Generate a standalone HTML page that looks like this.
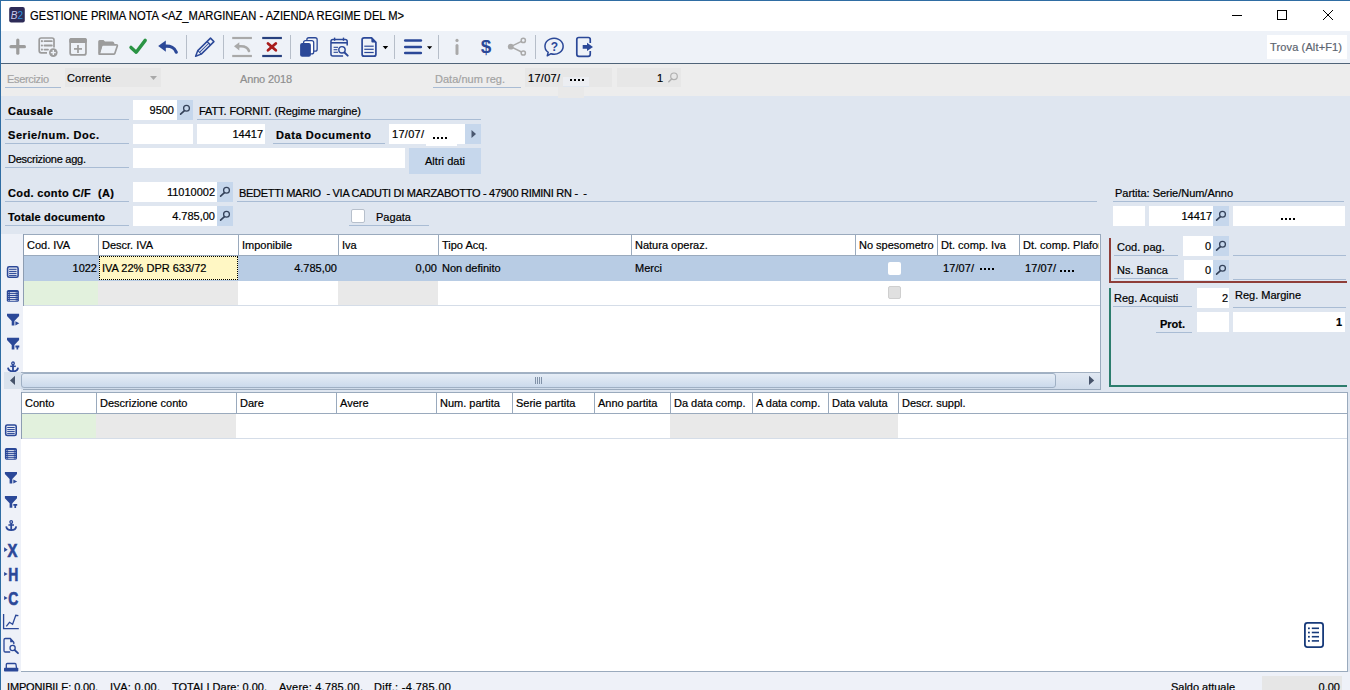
<!DOCTYPE html>
<html><head><meta charset="utf-8"><title>Gestione Prima Nota</title>
<style>
html,body{margin:0;padding:0;width:1350px;height:690px;overflow:hidden;background:#dfe6f0}
body{position:relative;font-family:"Liberation Sans",sans-serif}
#r>div{position:absolute}
.n,.b,.title{position:absolute;font-size:11px;line-height:13px;white-space:nowrap;color:#000;-webkit-text-stroke:0.2px}
.b{font-weight:bold}
.title{font-size:12px;color:#000}
svg{position:absolute;left:0;top:0}
</style></head><body>
<div id="r">
<div style="left:0px;top:0px;width:1350px;height:31px;background:#ffffff;"></div>
<div style="left:0px;top:31px;width:1350px;height:32px;background:#eef2f8;"></div>
<div style="left:0px;top:63px;width:1350px;height:1px;background:#4f6479;"></div>
<div style="left:0px;top:64px;width:1350px;height:32px;background:#ededed;"></div>
<div style="left:0px;top:96px;width:1350px;height:594px;background:#dfe6f0;"></div>
<div style="left:0px;top:0px;width:1350px;height:1px;background:#2f6da3;"></div>
<div style="left:0px;top:0px;width:1px;height:690px;background:#2f6da3;"></div>
<div style="left:1267px;top:35px;width:80px;height:24px;background:#ffffff;"></div>
<div style="left:5px;top:87px;width:56px;height:1px;background:#a9bcd4;"></div>
<div style="left:65px;top:68px;width:96px;height:19px;background:#e7e7e7;"></div>
<div style="left:433px;top:87px;width:88px;height:1px;background:#a9bcd4;"></div>
<div style="left:525px;top:68px;width:87px;height:19px;background:#e7e7e7;"></div>
<div style="left:563px;top:77px;width:26px;height:10px;background:#eceef2;"></div>
<div style="left:563px;top:86px;width:26px;height:1px;background:#dfe6ef;"></div>
<div style="left:558px;top:87px;width:26px;height:11px;background:#e9e9e9;"></div>
<div style="left:570px;top:79px;width:2px;height:2px;background:#000;"></div>
<div style="left:574px;top:79px;width:2px;height:2px;background:#000;"></div>
<div style="left:578px;top:79px;width:2px;height:2px;background:#000;"></div>
<div style="left:582px;top:79px;width:2px;height:2px;background:#000;"></div>
<div style="left:617px;top:68px;width:64px;height:19px;background:#e7e7e7;"></div>
<div style="left:5px;top:119px;width:124px;height:1px;background:#a9bcd4;"></div>
<div style="left:133px;top:100px;width:44px;height:20px;background:#fff;"></div>
<div style="left:177px;top:100px;width:16px;height:20px;background:#c6d7ec;"></div>
<div style="left:197px;top:119px;width:284px;height:1px;background:#a9bcd4;"></div>
<div style="left:5px;top:143px;width:124px;height:1px;background:#a9bcd4;"></div>
<div style="left:133px;top:124px;width:60px;height:20px;background:#fff;"></div>
<div style="left:197px;top:124px;width:68px;height:20px;background:#fff;"></div>
<div style="left:273px;top:143px;width:112px;height:1px;background:#a9bcd4;"></div>
<div style="left:389px;top:124px;width:76px;height:20px;background:#fff;"></div>
<div style="left:433px;top:137px;width:2px;height:2px;background:#000;"></div>
<div style="left:437px;top:137px;width:2px;height:2px;background:#000;"></div>
<div style="left:441px;top:137px;width:2px;height:2px;background:#000;"></div>
<div style="left:445px;top:137px;width:2px;height:2px;background:#000;"></div>
<div style="left:426px;top:144px;width:31px;height:2px;background:#ffffff;"></div>
<div style="left:465px;top:124px;width:16px;height:20px;background:#c6d7ec;"></div>
<div style="left:5px;top:167px;width:124px;height:1px;background:#a9bcd4;"></div>
<div style="left:133px;top:148px;width:272px;height:20px;background:#fff;"></div>
<div style="left:409px;top:148px;width:72px;height:26px;background:#c6d7ec;"></div>
<div style="left:5px;top:201px;width:124px;height:1px;background:#a9bcd4;"></div>
<div style="left:133px;top:182px;width:84px;height:20px;background:#fff;"></div>
<div style="left:217px;top:182px;width:16px;height:20px;background:#c6d7ec;"></div>
<div style="left:237px;top:201px;width:860px;height:1px;background:#a9bcd4;"></div>
<div style="left:5px;top:225px;width:124px;height:1px;background:#a9bcd4;"></div>
<div style="left:133px;top:206px;width:84px;height:20px;background:#fff;"></div>
<div style="left:217px;top:206px;width:16px;height:20px;background:#c6d7ec;"></div>
<div style="left:351px;top:209px;width:14px;height:14px;background:#fff;box-sizing:border-box;border:1px solid #b7c0cc;border-radius:2px"></div>
<div style="left:349px;top:225px;width:80px;height:1px;background:#a9bcd4;"></div>
<div style="left:1113px;top:201px;width:231px;height:1px;background:#a9bcd4;"></div>
<div style="left:1113px;top:206px;width:32px;height:20px;background:#fff;"></div>
<div style="left:1149px;top:206px;width:64px;height:20px;background:#fff;"></div>
<div style="left:1213px;top:206px;width:16px;height:20px;background:#c6d7ec;"></div>
<div style="left:1233px;top:206px;width:112px;height:20px;background:#fff;"></div>
<div style="left:1281px;top:218px;width:2px;height:2px;background:#000;"></div>
<div style="left:1285px;top:218px;width:2px;height:2px;background:#000;"></div>
<div style="left:1289px;top:218px;width:2px;height:2px;background:#000;"></div>
<div style="left:1293px;top:218px;width:2px;height:2px;background:#000;"></div>
<div style="left:1px;top:234px;width:22px;height:155px;background:#eef1f8;"></div>
<div style="left:23px;top:234px;width:1078px;height:156px;background:#ffffff;box-sizing:border-box;border:1px solid #9aaabd;border-left:0"></div>
<div style="left:23px;top:234px;width:1px;height:72px;background:#8d9db2;"></div>
<div style="left:24px;top:255px;width:1076px;height:1px;background:#9aaabd;"></div>
<div style="left:24px;top:256px;width:1076px;height:25px;background:#b8cce4;"></div>
<div style="left:99px;top:256px;width:139px;height:24px;background:#fff7c4;box-sizing:border-box;border:1px dotted #000"></div>
<div style="left:24px;top:281px;width:74px;height:24px;background:#e2f1dd;"></div>
<div style="left:98px;top:281px;width:140px;height:24px;background:#e9e9e9;"></div>
<div style="left:338px;top:281px;width:100px;height:24px;background:#e9e9e9;"></div>
<div style="left:24px;top:305px;width:1076px;height:1px;background:#d5dde8;"></div>
<div style="left:98px;top:235px;width:1px;height:20px;background:#9aaabd;"></div>
<div style="left:238px;top:235px;width:1px;height:20px;background:#9aaabd;"></div>
<div style="left:338px;top:235px;width:1px;height:20px;background:#9aaabd;"></div>
<div style="left:438px;top:235px;width:1px;height:20px;background:#9aaabd;"></div>
<div style="left:631px;top:235px;width:1px;height:20px;background:#9aaabd;"></div>
<div style="left:855px;top:235px;width:1px;height:20px;background:#9aaabd;"></div>
<div style="left:937px;top:235px;width:1px;height:20px;background:#9aaabd;"></div>
<div style="left:1019px;top:235px;width:1px;height:20px;background:#9aaabd;"></div>
<div style="left:888px;top:262px;width:13px;height:13px;background:#fff;border-radius:2px"></div>
<div style="left:888px;top:286px;width:13px;height:13px;background:#e0e0e0;box-sizing:border-box;border:1px solid #cfcfcf;border-radius:2px"></div>
<div style="left:980px;top:268px;width:2px;height:2px;background:#000;"></div>
<div style="left:984px;top:268px;width:2px;height:2px;background:#000;"></div>
<div style="left:988px;top:268px;width:2px;height:2px;background:#000;"></div>
<div style="left:992px;top:268px;width:2px;height:2px;background:#000;"></div>
<div style="left:1060px;top:270px;width:2px;height:2px;background:#000;"></div>
<div style="left:1064px;top:270px;width:2px;height:2px;background:#000;"></div>
<div style="left:1068px;top:270px;width:2px;height:2px;background:#000;"></div>
<div style="left:1072px;top:270px;width:2px;height:2px;background:#000;"></div>
<div style="left:21px;top:372px;width:1079px;height:17px;background:linear-gradient(#e2e9f3,#cfdbea);"></div>
<div style="left:21px;top:372px;width:1079px;height:1px;background:#a3b1c2;"></div>
<div style="left:21px;top:373px;width:1035px;height:15px;background:linear-gradient(#e6edf6,#cbdaec);box-sizing:border-box;border:1px solid #9fb0c4;border-radius:3px"></div>
<div style="left:4px;top:372px;width:17px;height:17px;background:#d9e2ed;"></div>
<div style="left:12px;top:389px;width:6px;height:1px;background:#2b4898;"></div>
<div style="left:1109px;top:238px;width:2px;height:45px;background:#8f3e39;"></div>
<div style="left:1109px;top:281px;width:238px;height:2px;background:#8f3e39;"></div>
<div style="left:1114px;top:255px;width:64px;height:1px;background:#a9bcd4;"></div>
<div style="left:1183px;top:236px;width:30px;height:20px;background:#fff;"></div>
<div style="left:1213px;top:236px;width:16px;height:20px;background:#c6d7ec;"></div>
<div style="left:1233px;top:255px;width:113px;height:1px;background:#a9bcd4;"></div>
<div style="left:1114px;top:278px;width:64px;height:1px;background:#a9bcd4;"></div>
<div style="left:1184px;top:260px;width:29px;height:20px;background:#fff;"></div>
<div style="left:1213px;top:260px;width:16px;height:20px;background:#c6d7ec;"></div>
<div style="left:1233px;top:279px;width:113px;height:1px;background:#a9bcd4;"></div>
<div style="left:1109px;top:288px;width:2px;height:99px;background:#2c7d6d;"></div>
<div style="left:1109px;top:385px;width:238px;height:2px;background:#2c7d6d;"></div>
<div style="left:1113px;top:306px;width:79px;height:1px;background:#a9bcd4;"></div>
<div style="left:1197px;top:288px;width:32px;height:20px;background:#fff;"></div>
<div style="left:1233px;top:307px;width:113px;height:1px;background:#a9bcd4;"></div>
<div style="left:1156px;top:332px;width:36px;height:1px;background:#a9bcd4;"></div>
<div style="left:1197px;top:312px;width:32px;height:20px;background:#fff;"></div>
<div style="left:1233px;top:312px;width:112px;height:20px;background:#fff;"></div>
<div style="left:1px;top:389px;width:20px;height:283px;background:#eef1f8;"></div>
<div style="left:21px;top:392px;width:1327px;height:280px;background:#ffffff;box-sizing:border-box;border:1px solid #9aaabd;border-left:0"></div>
<div style="left:21px;top:392px;width:1px;height:47px;background:#8d9db2;"></div>
<div style="left:22px;top:413px;width:1325px;height:1px;background:#9aaabd;"></div>
<div style="left:22px;top:414px;width:74px;height:24px;background:#e2f1dd;"></div>
<div style="left:96px;top:414px;width:140px;height:24px;background:#e9e9e9;"></div>
<div style="left:670px;top:414px;width:228px;height:24px;background:#e9e9e9;"></div>
<div style="left:22px;top:438px;width:1325px;height:1px;background:#d5dde8;"></div>
<div style="left:96px;top:393px;width:1px;height:20px;background:#9aaabd;"></div>
<div style="left:236px;top:393px;width:1px;height:20px;background:#9aaabd;"></div>
<div style="left:336px;top:393px;width:1px;height:20px;background:#9aaabd;"></div>
<div style="left:436px;top:393px;width:1px;height:20px;background:#9aaabd;"></div>
<div style="left:512px;top:393px;width:1px;height:20px;background:#9aaabd;"></div>
<div style="left:594px;top:393px;width:1px;height:20px;background:#9aaabd;"></div>
<div style="left:670px;top:393px;width:1px;height:20px;background:#9aaabd;"></div>
<div style="left:752px;top:393px;width:1px;height:20px;background:#9aaabd;"></div>
<div style="left:828px;top:393px;width:1px;height:20px;background:#9aaabd;"></div>
<div style="left:898px;top:393px;width:1px;height:20px;background:#9aaabd;"></div>
<div style="left:1px;top:672px;width:1349px;height:18px;background:#eef1f8;"></div>
<div style="left:1262px;top:676px;width:80px;height:14px;background:#e6e6e6;"></div>
</div>
<div id="t0" class="title" style="top:10px;left:30px;transform:scaleX(0.932);transform-origin:0 0">GESTIONE PRIMA NOTA &lt;AZ_MARGINEAN - AZIENDA REGIME DEL M&gt;</div>
<div id="t1" class="n" style="top:41px;left:1270px;letter-spacing:0.138px;color:#5c6470">Trova (Alt+F1)</div>
<div id="t2" class="n" style="top:73px;left:7px;letter-spacing:-0.328px;color:#a3a3a3">Esercizio</div>
<div id="t3" class="n" style="top:72px;left:67px;letter-spacing:0.172px;">Corrente</div>
<div id="t4" class="n" style="top:73px;left:240px;letter-spacing:-0.152px;color:#8f8f8f">Anno 2018</div>
<div id="t5" class="n" style="top:73px;left:435px;letter-spacing:0.025px;color:#a3a3a3">Data/num reg.</div>
<div id="t6" class="n" style="top:72px;left:528px;letter-spacing:0.281px;">17/07/</div>
<div id="t7" class="n" style="top:72px;right:687px;">1</div>
<div id="t8" class="b" style="top:105px;left:8px;letter-spacing:0.466px;">Causale</div>
<div id="t9" class="n" style="top:104px;right:1176px;">9500</div>
<div id="t10" class="n" style="top:105px;left:199px;letter-spacing:-0.098px;">FATT. FORNIT. (Regime margine)</div>
<div id="t11" class="b" style="top:129px;left:8px;letter-spacing:0.561px;">Serie/num. Doc.</div>
<div id="t12" class="n" style="top:128px;right:1087px;">14417</div>
<div id="t13" class="b" style="top:129px;left:276px;letter-spacing:0.584px;">Data Documento</div>
<div id="t14" class="n" style="top:128px;left:392px;letter-spacing:0.281px;">17/07/</div>
<div id="t15" class="n" style="top:153px;left:8px;letter-spacing:-0.263px;">Descrizione agg.</div>
<div id="t16" class="n" style="top:155px;left:425px;letter-spacing:0.028px;">Altri dati</div>
<div id="t17" class="b" style="top:187px;left:8px;letter-spacing:0.356px;white-space:pre">Cod. conto C/F  (A)</div>
<div id="t18" class="n" style="top:186px;right:1135px;">11010002</div>
<div id="t19" class="n" style="top:187px;left:239px;letter-spacing:-0.284px;white-space:pre">BEDETTI MARIO  - VIA CADUTI DI MARZABOTTO - 47900 RIMINI RN -  -</div>
<div id="t20" class="b" style="top:211px;left:8px;letter-spacing:0.205px;">Totale documento</div>
<div id="t21" class="n" style="top:210px;right:1135px;">4.785,00</div>
<div id="t22" class="n" style="top:211px;left:376px;letter-spacing:0.025px;">Pagata</div>
<div id="t23" class="n" style="top:187px;left:1115px;letter-spacing:-0.028px;">Partita: Serie/Num/Anno</div>
<div id="t24" class="n" style="top:210px;right:138px;">14417</div>
<div id="t25" class="n" style="top:239px;left:27px;">Cod. IVA</div>
<div id="t26" class="n" style="top:239px;left:102px;">Descr. IVA</div>
<div id="t27" class="n" style="top:239px;left:242px;">Imponibile</div>
<div id="t28" class="n" style="top:239px;left:342px;">Iva</div>
<div id="t29" class="n" style="top:239px;left:442px;">Tipo Acq.</div>
<div id="t30" class="n" style="top:239px;left:635px;">Natura operaz.</div>
<div id="t31" class="n" style="top:239px;left:859px;">No spesometro</div>
<div id="t32" class="n" style="top:239px;left:941px;">Dt. comp. Iva</div>
<div id="t33" class="n" style="top:239px;left:1023px;overflow:hidden;width:76px">Dt. comp. Plafond</div>
<div id="t34" class="n" style="top:262px;right:1253px;">1022</div>
<div id="t35" class="n" style="top:262px;left:102px;">IVA 22% DPR 633/72</div>
<div id="t36" class="n" style="top:262px;right:1013px;">4.785,00</div>
<div id="t37" class="n" style="top:262px;right:913px;">0,00</div>
<div id="t38" class="n" style="top:262px;left:442px;">Non definito</div>
<div id="t39" class="n" style="top:262px;left:635px;">Merci</div>
<div id="t40" class="n" style="top:262px;left:943px;letter-spacing:0.081px;">17/07/</div>
<div id="t41" class="n" style="top:262px;left:1025px;letter-spacing:0.081px;">17/07/</div>
<div id="t42" class="n" style="top:241px;left:1117px;">Cod. pag.</div>
<div id="t43" class="n" style="top:240px;right:139px;">0</div>
<div id="t44" class="n" style="top:264px;left:1117px;">Ns. Banca</div>
<div id="t45" class="n" style="top:264px;right:139px;">0</div>
<div id="t46" class="n" style="top:292px;left:1114px;">Reg. Acquisti</div>
<div id="t47" class="n" style="top:292px;right:122px;">2</div>
<div id="t48" class="n" style="top:289px;left:1235px;">Reg. Margine</div>
<div id="t49" class="b" style="top:318px;left:1160px;">Prot.</div>
<div id="t50" class="b" style="top:316px;right:8px;">1</div>
<div id="t51" class="n" style="top:397px;left:25px;">Conto</div>
<div id="t52" class="n" style="top:397px;left:100px;">Descrizione conto</div>
<div id="t53" class="n" style="top:397px;left:240px;">Dare</div>
<div id="t54" class="n" style="top:397px;left:340px;">Avere</div>
<div id="t55" class="n" style="top:397px;left:440px;">Num. partita</div>
<div id="t56" class="n" style="top:397px;left:516px;">Serie partita</div>
<div id="t57" class="n" style="top:397px;left:598px;">Anno partita</div>
<div id="t58" class="n" style="top:397px;left:674px;">Da data comp.</div>
<div id="t59" class="n" style="top:397px;left:756px;">A data comp.</div>
<div id="t60" class="n" style="top:397px;left:832px;">Data valuta</div>
<div id="t61" class="n" style="top:397px;left:902px;">Descr. suppl.</div>
<div id="t62" class="n" style="top:681px;left:7px;letter-spacing:-0.159px;">IMPONIBILE: 0,00,</div>
<div id="t63" class="n" style="top:681px;left:110px;letter-spacing:0.278px;">IVA: 0,00,</div>
<div id="t64" class="n" style="top:681px;left:172px;letter-spacing:0.002px;">TOTALI Dare: 0,00,</div>
<div id="t65" class="n" style="top:681px;left:279px;letter-spacing:0.231px;">Avere: 4.785,00,</div>
<div id="t66" class="n" style="top:681px;left:374px;letter-spacing:0.336px;">Diff.: -4.785,00</div>
<div id="t67" class="n" style="top:681px;left:1171px;letter-spacing:-0.018px;">Saldo attuale</div>
<div id="t68" class="n" style="top:681px;right:10px;">0,00</div>
<svg width="1350" height="690" viewBox="0 0 1350 690" style="position:absolute;left:0;top:0;pointer-events:none">
<!-- app icon -->
<rect x="9.2" y="7" width="15.6" height="15.5" rx="2" fill="#2d2b57"/>
<text x="10.8" y="18.6" font-family="Liberation Sans" font-style="italic" font-size="10" fill="#c9c9ec">B</text>
<text x="17.6" y="18.6" font-family="Liberation Sans" font-size="10" fill="#2f93dc">2</text>
<!-- window controls -->
<g stroke="#000" stroke-width="1" fill="none">
<line x1="1232" y1="15.5" x2="1242" y2="15.5"/>
<rect x="1277.5" y="10.5" width="9" height="9"/>
<line x1="1323" y1="10" x2="1333" y2="20"/><line x1="1333" y1="10" x2="1323" y2="20"/>
</g>
<!-- toolbar separators -->
<g fill="#b6bec9">
<rect x="186" y="35" width="1" height="24"/><rect x="223" y="35" width="1" height="24"/>
<rect x="290" y="35" width="1" height="24"/><rect x="394" y="35" width="1" height="24"/>
<rect x="438" y="35" width="1" height="24"/><rect x="535" y="35" width="1" height="24"/>
</g>
<!-- plus -->
<g stroke="#9c9c9c" stroke-width="3.2" stroke-linecap="round">
<line x1="11" y1="46.7" x2="24.4" y2="46.7"/><line x1="17.8" y1="40" x2="17.8" y2="53.2"/>
</g>
<!-- list plus -->
<g stroke="#9c9c9c" fill="none">
<path d="M47,52.85 H41.2 A2,2 0 0 1 39.2,50.85 V40 A2,2 0 0 1 41.2,38 H52 A2,2 0 0 1 54,40 V47.5" stroke-width="1.7"/>
<line x1="44.5" y1="41.2" x2="51.8" y2="41.2" stroke-width="1.8" stroke-linecap="round"/>
<line x1="44.5" y1="45.5" x2="51.8" y2="45.5" stroke-width="1.8" stroke-linecap="round"/>
<line x1="44.5" y1="49.6" x2="48" y2="49.6" stroke-width="1.8" stroke-linecap="round"/>
</g>
<g fill="#9c9c9c"><circle cx="41.9" cy="41.2" r="1.1"/><circle cx="41.9" cy="45.5" r="1.1"/><circle cx="41.9" cy="49.6" r="1.1"/></g>
<circle cx="53.3" cy="52.6" r="4.3" fill="#9c9c9c"/>
<g stroke="#eef2f8" stroke-width="1.4"><line x1="50.8" y1="52.6" x2="55.8" y2="52.6"/><line x1="53.3" y1="50.1" x2="53.3" y2="55.1"/></g>
<!-- calendar plus -->
<rect x="70.15" y="38.95" width="15.8" height="16" rx="2" fill="none" stroke="#9c9c9c" stroke-width="1.7"/>
<rect x="69.3" y="38.1" width="17.5" height="4.9" rx="1.5" fill="#9c9c9c"/>
<g stroke="#9c9c9c" stroke-width="1.7"><line x1="74" y1="48.9" x2="82" y2="48.9"/><line x1="78" y1="45" x2="78" y2="53"/></g>
<!-- folder -->
<path d="M98.2,53 V41.5 Q98.2,40 99.7,40 H103.5 L105,41.5 H112.5 Q114,41.5 114.3,43 L114.5,44 H105 Q103,44 102.3,46 L99.5,54 Q98.2,54.2 98.2,53 Z" fill="#9c9c9c"/>
<path d="M101.8,44.8 H116.3 Q117.6,44.8 117.3,46 L114.8,53.4 Q114.5,54.2 113.6,54.2 H99.2 Z" fill="none" stroke="#9c9c9c" stroke-width="1.7" stroke-linejoin="round"/>
<!-- check -->
<polyline points="131,47.4 136.2,52.2 145.2,40.4" fill="none" stroke="#2a9444" stroke-width="3.4" stroke-linecap="round" stroke-linejoin="round"/>
<!-- undo -->
<path d="M158.2,46.1 L165.8,40.6 V51.8 Z" fill="#2b4898"/>
<path d="M164.5,46.3 C170.5,45.6 175,48.2 176.3,52.2" fill="none" stroke="#2b4898" stroke-width="3.2" stroke-linecap="round"/>
<!-- pencil -->
<g transform="translate(195.6,56.2) rotate(-44.5)" fill="none" stroke="#2b4898" stroke-width="1.5" stroke-linejoin="round">
<path d="M0,0 L5.5,-2.45 H23.3 V2.45 H5.5 Z"/>
<line x1="18.5" y1="-2.45" x2="18.5" y2="2.45"/>
<line x1="5.5" y1="0" x2="18.5" y2="0" stroke-width="1"/>
<line x1="5.5" y1="-2.45" x2="5.5" y2="2.45" stroke-width="1"/>
</g>
<!-- gray undo with lines -->
<g stroke="#a9a9a9" stroke-width="2.2"><line x1="232.2" y1="38" x2="251.9" y2="38"/><line x1="232.2" y1="56" x2="251.9" y2="56"/></g>
<path d="M234,46.3 L239.3,42.3 V50.4 Z" fill="#a9a9a9"/>
<path d="M238.5,46.4 C244,45.8 248,47.8 249,51" fill="none" stroke="#a9a9a9" stroke-width="2.6" stroke-linecap="round"/>
<!-- X with lines -->
<g stroke="#27407e" stroke-width="2.2"><line x1="262.2" y1="38" x2="281.9" y2="38"/><line x1="262.2" y1="56" x2="281.9" y2="56"/></g>
<g stroke="#a81d1d" stroke-width="2.8" stroke-linecap="round"><line x1="268" y1="43.5" x2="275.8" y2="50.3"/><line x1="275.8" y1="43.5" x2="268" y2="50.3"/></g>
<!-- copy -->
<g fill="none" stroke="#2b4898" stroke-width="1.3">
<rect x="306.85" y="37.75" width="10.3" height="13.4" rx="2"/>
</g>
<rect x="303.6" y="40.6" width="10.1" height="13.3" rx="2" fill="#fff" stroke="#2b4898" stroke-width="1.3"/>
<rect x="300.1" y="42.9" width="10.8" height="13.9" rx="2" fill="#2b4898"/>
<!-- calendar search -->
<g fill="none" stroke="#2b4898" stroke-width="1.5">
<path d="M343.1,56.05 H332.9 A2,2 0 0 1 330.95,54.05 V41.4 A2,2 0 0 1 332.95,39.4 H345.2 A2,2 0 0 1 347.2,41.4 V45.6"/>
<line x1="331" y1="42.8" x2="347.2" y2="42.8" stroke-width="1.6"/>
<line x1="334.6" y1="37.6" x2="334.6" y2="40.8" stroke-width="1.4"/>
<line x1="343.5" y1="37.6" x2="343.5" y2="40.8" stroke-width="1.4"/>
<line x1="333.6" y1="47.3" x2="338" y2="47.3" stroke-width="1.1"/>
<line x1="333.6" y1="49.7" x2="337.4" y2="49.7" stroke-width="1.1"/>
<line x1="333.6" y1="52.3" x2="338" y2="52.3" stroke-width="1.1"/>
<circle cx="342" cy="49.8" r="3.2" stroke-width="1.4"/>
<line x1="344.5" y1="52.5" x2="347.7" y2="55.6" stroke-width="2" stroke-linecap="round"/>
</g>
<!-- doc -->
<path d="M371.6,37.85 H364.1 A2,2 0 0 0 362.1,39.85 V54.15 A2,2 0 0 0 364.1,56.15 H373.9 A2,2 0 0 0 375.9,54.15 V42.3 Z" fill="none" stroke="#2b4898" stroke-width="1.7" stroke-linejoin="round"/>
<path d="M371.4,37.6 L376.4,42.6 H372.4 Q371.4,42.6 371.4,41.6 Z" fill="#2b4898"/>
<g stroke="#2b4898" stroke-width="1.2"><line x1="364.3" y1="46.2" x2="373.7" y2="46.2"/><line x1="364.3" y1="49.3" x2="373.7" y2="49.3"/><line x1="364.3" y1="52.5" x2="373.7" y2="52.5"/></g>
<path d="M382.7,46 H388.2 L385.45,49.2 Z" fill="#000"/>
<!-- menu -->
<g stroke="#2b4898" stroke-width="2.5" stroke-linecap="round"><line x1="405.2" y1="40.6" x2="420.9" y2="40.6"/><line x1="405.2" y1="46.9" x2="420.9" y2="46.9"/><line x1="405.2" y1="53" x2="420.9" y2="53"/></g>
<path d="M427,46.2 H432.2 L429.6,49.2 Z" fill="#000"/>
<!-- i -->
<circle cx="457" cy="40.4" r="1.6" fill="#a9a9a9"/>
<line x1="457" y1="45.4" x2="457" y2="53.4" stroke="#a9a9a9" stroke-width="3" stroke-linecap="round"/>
<!-- $ -->
<text x="480.8" y="53.4" font-family="Liberation Sans" font-weight="bold" font-size="19" fill="#2b4898">$</text>
<!-- share -->
<g stroke="#a9a9a9" stroke-width="1.5" fill="none">
<line x1="510.7" y1="46.7" x2="521.5" y2="41.4"/><line x1="510.7" y1="46.7" x2="521.5" y2="52"/>
<circle cx="523.3" cy="40.4" r="2.1"/><circle cx="523.3" cy="53" r="2.1"/>
</g>
<circle cx="510.7" cy="46.7" r="2.9" fill="#a9a9a9"/>
<!-- help -->
<path d="M548.2,52.3 A9.1,7.95 0 1 1 551,53.7 L547.3,55.8 Z" fill="none" stroke="#2b4898" stroke-width="1.5" stroke-linejoin="round"/>
<text x="550.7" y="50.8" font-family="Liberation Sans" font-weight="bold" font-size="12" fill="#2b4898">?</text>
<!-- exit -->
<path d="M590.25,43 V39.5 A2,2 0 0 0 588.25,37.5 H578.8 A2,2 0 0 0 576.8,39.5 V54.3 A2,2 0 0 0 578.8,56.3 H588.25 A2,2 0 0 0 590.25,54.3 V51" fill="none" stroke="#2b4898" stroke-width="1.7"/>
<path d="M582.7,45 H587 V42.7 L593,46.9 L587,50.9 V48.8 H582.7 Z" fill="#2b4898"/>

<!-- field magnifiers -->
<g id="mag" fill="none" stroke="#34425a" stroke-width="1.3">
<circle cx="186.5" cy="108.3" r="2.9"/><line x1="184.2" y1="110.8" x2="180.6" y2="114.2" stroke-width="1.6" stroke-linecap="round"/>
</g>
<use href="#mag" x="40" y="82"/>
<use href="#mag" x="40" y="106"/>
<use href="#mag" x="1036" y="106"/>
<use href="#mag" x="1036" y="136"/>
<use href="#mag" x="1036" y="160"/>
<g fill="none" stroke="#b0b0b0" stroke-width="1.2">
<circle cx="674" cy="76.3" r="3.3"/><line x1="671.6" y1="78.9" x2="668.8" y2="81.8" stroke-width="1.5" stroke-linecap="round"/>
</g>
<!-- combo triangle -->
<path d="M150,76 H157 L153.5,80 Z" fill="#a9a9a9"/>
<!-- date arrow -->
<path d="M471.5,130 L476,134 L471.5,138 Z" fill="#4a5870"/>
<!-- scrollbar arrows & grip -->
<path d="M15,375.8 V385 L10,380.4 Z" fill="#46536a"/>
<path d="M1089,375.8 V385 L1094.2,380.4 Z" fill="#46536a"/>
<g fill="#8192a8"><rect x="535" y="377" width="1" height="7"/><rect x="537" y="377" width="1" height="7"/><rect x="539" y="377" width="1" height="7"/><rect x="541" y="377" width="1" height="7"/></g>

<!-- side icons: define -->
<defs>
<g id="iA"><rect x="0.8" y="0.8" width="10.5" height="10.5" rx="1.6" fill="none" stroke="#2b4898" stroke-width="1.6"/>
<g stroke="#2b4898" stroke-width="1.1"><line x1="2.3" y1="3.3" x2="9.8" y2="3.3"/><line x1="2.3" y1="5.4" x2="9.8" y2="5.4"/><line x1="2.3" y1="7.4" x2="9.8" y2="7.4"/><line x1="2.3" y1="9.4" x2="9.8" y2="9.4"/></g></g>
<g id="iB"><rect x="0" y="0" width="12.1" height="11.8" rx="1.6" fill="#2b4898"/>
<g stroke="#fff" stroke-width="0.8"><line x1="3.2" y1="2.6" x2="9" y2="2.6"/><line x1="3.2" y1="4.5" x2="9" y2="4.5"/><line x1="3.2" y1="6.5" x2="9" y2="6.5"/><line x1="3.2" y1="8.5" x2="9" y2="8.5"/><line x1="3.2" y1="10.4" x2="9" y2="10.4"/></g>
<g fill="#c9d3ea"><rect x="1.5" y="2.2" width="1" height="0.8"/><rect x="1.5" y="4.1" width="1" height="0.8"/><rect x="1.5" y="6.1" width="1" height="0.8"/><rect x="1.5" y="8.1" width="1" height="0.8"/><rect x="1.5" y="10" width="1" height="0.8"/>
<rect x="9.6" y="2.2" width="1" height="0.8"/><rect x="9.6" y="4.1" width="1" height="0.8"/><rect x="9.6" y="6.1" width="1" height="0.8"/><rect x="9.6" y="8.1" width="1" height="0.8"/><rect x="9.6" y="10" width="1" height="0.8"/></g></g>
<g id="iF1"><path d="M0,0 H12.1 V2.2 L7.4,7.1 V11.6 H4.7 V7.1 L0,2.2 Z" fill="#2b4898"/><path d="M8.4,7.5 L12.3,9.55 L8.4,11.6 Z" fill="#2b4898"/></g>
<g id="iF2"><path d="M0,0 H12.1 V2.2 L7.4,7.1 V11.6 H4.7 V7.1 L0,2.2 Z" fill="#2b4898"/><path d="M8.4,7.8 H12.3 V9.6 H11.2 V11.8 H9.5 V9.6 H8.4 Z" fill="#2b4898"/></g>
<g id="iAn" fill="none" stroke="#2b4898"><circle cx="5.8" cy="1.6" r="1.3" stroke-width="1.3"/><line x1="5.8" y1="3" x2="5.8" y2="9.8" stroke-width="1.8"/><line x1="3" y1="4.6" x2="8.6" y2="4.6" stroke-width="1.5"/><path d="M0.8,6 Q1.2,9.7 5.8,9.7 Q10.4,9.7 10.8,6" stroke-width="1.8"/></g>
</defs>
<use href="#iA" x="6.8" y="266"/>
<use href="#iB" x="6.8" y="290"/>
<use href="#iF1" x="7" y="313.8"/>
<use href="#iF2" x="7" y="337.8"/>
<svg x="0" y="355" width="23" height="17" overflow="hidden"><use href="#iAn" x="7.2" y="6.7"/></svg>

<use href="#iA" x="4.9" y="424.2"/>
<use href="#iB" x="4.9" y="447.9"/>
<use href="#iF1" x="4.9" y="471.9"/>
<use href="#iF2" x="4.9" y="496.1"/>
<use href="#iAn" x="5.4" y="520.4"/>
<g fill="#2b4898">
<path d="M4.1,547.2 L7.7,549.65 L4.1,552.1 Z"/>
<path d="M4.1,571.9 L7.7,574 L4.1,576.1 Z"/>
<path d="M4.1,596 L7.7,598 L4.1,600 Z"/>
</g>
<g font-family="Liberation Sans" font-weight="bold" font-size="18.5" fill="#2b4898" stroke="#2b4898" stroke-width="0.7">
<text x="0" y="0" transform="translate(7.6,556.8) scale(0.8,1)">X</text>
<text x="0" y="0" transform="translate(8.2,580.8) scale(0.75,1)">H</text>
<text x="0" y="0" transform="translate(8.2,604.8) scale(0.75,1)">C</text>
</g>
<g fill="none" stroke="#2b4898" stroke-width="1.3">
<path d="M3.6,614 V628.7 H18.8"/>
<path d="M6.3,626.3 L9.5,622.3 L12.6,624.3 L15.8,615.3 L18.4,615.6"/>
<path d="M10.2,652 H5.3 A1.3,1.3 0 0 1 4,650.7 V639.8 A1.3,1.3 0 0 1 5.3,638.5 H10.3 L13.8,642.2 V644.3"/>
<circle cx="12.6" cy="648" r="2.6"/>
<line x1="14.6" y1="650" x2="18" y2="653.2" stroke-width="1.8" stroke-linecap="round"/>
<path d="M6.3,668.2 V664.5 A1,1 0 0 1 7.3,663.5 H15 A1,1 0 0 1 16,664.5 L16.5,668.2"/>
</g>
<path d="M10.2,638.5 L13.8,642.2 H10.2 Z" fill="#2b4898"/>
<rect x="4" y="667.8" width="14.3" height="3.8" rx="0.8" fill="#2b4898"/>
<!-- list icon bottom right -->
<g fill="none" stroke="#173a7a" stroke-width="1.8">
<rect x="1304.9" y="622.9" width="18.2" height="24.2" rx="2.5"/>
<line x1="1311.8" y1="628.3" x2="1319" y2="628.3" stroke-width="1.6"/>
<line x1="1311.8" y1="632.5" x2="1319" y2="632.5" stroke-width="1.6"/>
<line x1="1311.8" y1="636.7" x2="1319" y2="636.7" stroke-width="1.6"/>
<line x1="1311.8" y1="640.9" x2="1319" y2="640.9" stroke-width="1.6"/>
</g>
<g fill="#173a7a"><rect x="1308" y="627.5" width="1.8" height="1.7"/><rect x="1308" y="631.7" width="1.8" height="1.7"/><rect x="1308" y="635.9" width="1.8" height="1.7"/><rect x="1308" y="640.1" width="1.8" height="1.7"/></g>
</svg>

</body></html>
